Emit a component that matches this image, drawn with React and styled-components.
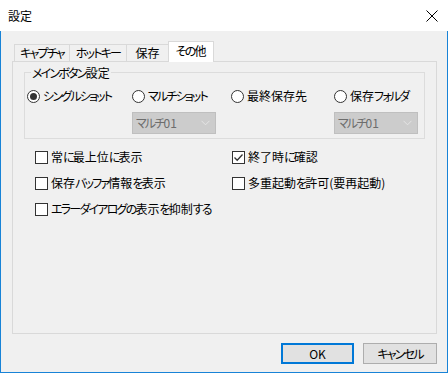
import React from "react";
import styled, { createGlobalStyle } from "styled-components";

const GlobalStyle = createGlobalStyle`
  html, body {
    margin: 0;
    padding: 0;
    background: #ffffff;
  }
  body {
    font-family: "Noto Sans CJK JP", "Noto Sans", sans-serif;
    font-size: 12px;
    color: #000;
    font-feature-settings: "palt";
  }
`;

const SCWindow = styled.div`
  width: 448px;
  height: 373px;
  display: flex;
  flex-direction: column;
  box-sizing: border-box;
`;

const SCTitleBar = styled.div`
  height: 31px;
  flex-shrink: 0;
  background: #ffffff;
  display: flex;
  align-items: center;
  justify-content: space-between;
  padding: 0 10px 0 8px;
  box-sizing: border-box;
  line-height: 16px;
`;

const SCClose = styled.div`
  width: 12px;
  height: 12px;
  display: flex;
  align-items: center;
  justify-content: center;
`;

const SCBody = styled.div`
  flex: 1;
  background: #f0f0f0;
  border: 1px solid #1883d7;
  border-top: none;
  padding: 10px 10px 0 11px;
  box-sizing: border-box;
  display: flex;
  flex-direction: column;
`;

// kana in the original UI font is much narrower than in Noto
const SCKana = styled.span`
  letter-spacing: -1.8px;
`;

const SCTabStrip = styled.div`
  display: flex;
  align-items: flex-end;
  height: 20px;
  margin-left: 2px;
  position: relative;
  z-index: 1;
`;

const SCTab = styled.div`
  width: ${(p) => p.$w}px;
  height: ${(p) => (p.$active ? 21 : 17)}px;
  margin-bottom: ${(p) => (p.$active ? -1 : 0)}px;
  margin-left: ${(p) => (p.$first ? 0 : -1)}px;
  box-sizing: border-box;
  border: 1px solid #d9d9d9;
  border-bottom: none;
  background: ${(p) => (p.$active ? "#ffffff" : "#f0f0f0")};
  display: flex;
  align-items: center;
  justify-content: center;
  line-height: 16px;
  white-space: nowrap;
  padding-bottom: ${(p) => (p.$active ? 2 : 0)}px;
  position: relative;
  z-index: ${(p) => (p.$active ? 2 : 1)};
`;

const SCPanel = styled.div`
  height: 273px;
  box-sizing: border-box;
  border: 1px solid #d9d9d9;
  background: #f0f0f0;
  padding: 10px 11px 0 11px;
`;

const SCGroup = styled.div`
  position: relative;
  border: 1px solid #dcdcdc;
  padding: 15px 0 4px 2px;
`;

const SCLegend = styled.span`
  position: absolute;
  top: -8px;
  left: 6px;
  padding: 0 1px;
  background: #f0f0f0;
  line-height: 16px;
`;

const SCOptionGrid = styled.div`
  display: grid;
  grid-template-columns: 105px 99px 103px 1fr;
  grid-template-rows: 16px 22px;
  row-gap: 8px;
`;

const SCRadioLabel = styled.label`
  display: flex;
  align-items: center;
  gap: 3px;
  line-height: 16px;
  white-space: nowrap;
`;

const SCRadioCircle = styled.span`
  width: 13px;
  height: 13px;
  box-sizing: border-box;
  border: 1px solid #333333;
  border-radius: 50%;
  background: #ffffff;
  display: flex;
  align-items: center;
  justify-content: center;
  flex-shrink: 0;

  &::after {
    content: "";
    width: 7px;
    height: 7px;
    border-radius: 50%;
    background: #333333;
    display: ${(p) => (p.$checked ? "block" : "none")};
  }
`;

const SCSelect = styled.div`
  width: 84px;
  height: 22px;
  box-sizing: border-box;
  background: #cccccc;
  border: 1px solid #bfbfbf;
  color: #6d6d6d;
  display: flex;
  align-items: center;
  justify-content: space-between;
  padding: 0 5px 0 3px;
  line-height: 16px;
`;

const SCCheckGrid = styled.div`
  display: grid;
  grid-template-columns: 197px 1fr;
  grid-auto-rows: 16px;
  row-gap: 10px;
  margin: 10px 0 0 11px;
`;

const SCCheckLabel = styled.label`
  display: flex;
  align-items: center;
  gap: 3px;
  line-height: 16px;
  white-space: nowrap;
`;

const SCCheckBox = styled.span`
  width: 13px;
  height: 13px;
  box-sizing: border-box;
  border: 1px solid #333333;
  background: #ffffff;
  display: flex;
  align-items: center;
  justify-content: center;
  flex-shrink: 0;
`;

const SCFooter = styled.div`
  display: flex;
  justify-content: flex-end;
  gap: 9px;
  margin-top: 9px;
`;

const SCButton = styled.button`
  width: ${(p) => p.$w}px;
  height: 21px;
  box-sizing: border-box;
  background: #e1e1e1;
  border: 1px solid ${(p) => (p.$default ? "#0078d7" : "#adadad")};
  box-shadow: ${(p) => (p.$default ? "inset 0 0 0 1px #0078d7" : "none")};
  font-family: inherit;
  font-size: 12px;
  font-feature-settings: "palt";
  color: #000;
  padding: 0;
  line-height: 16px;
`;

const KANA = /([\u3040-\u30ff]+)/;

const T = ({ children }) =>
  String(children)
    .split(KANA)
    .map((s, i) => (i % 2 ? <SCKana key={i}>{s}</SCKana> : s));

const tabs = [
  { name: "キャプチャ", w: 56 },
  { name: "ホットキー", w: 58 },
  { name: "保存", w: 43 },
  { name: "その他", w: 46, active: true },
];

const Radio = ({ checked, children }) => (
  <SCRadioLabel>
    <SCRadioCircle $checked={checked} />
    <span>
      <T>{children}</T>
    </span>
  </SCRadioLabel>
);

const Check = ({ checked, children }) => (
  <SCCheckLabel>
    <SCCheckBox>
      {checked && (
        <svg width="11" height="11" viewBox="0 0 11 11">
          <polyline
            points="1.5,5.5 4.2,8.3 9.5,2.5"
            fill="none"
            stroke="#333"
            strokeWidth="1.3"
          />
        </svg>
      )}
    </SCCheckBox>
    <span>
      <T>{children}</T>
    </span>
  </SCCheckLabel>
);

const Select = ({ value }) => (
  <SCSelect>
    <span>
      <T>{value}</T>
    </span>
    <svg width="9" height="6" viewBox="0 0 9 6">
      <polyline points="0.5,0.8 4.5,4.8 8.5,0.8" fill="none" stroke="#e4e4e4" strokeWidth="1" />
    </svg>
  </SCSelect>
);

const App = () => {
  return (
    <>
      <GlobalStyle />
      <SCWindow>
        <SCTitleBar>
          <span>設定</span>
          <SCClose>
            <svg width="12" height="12" viewBox="0 0 12 12">
              <path d="M0.5 0.5 L11.5 11.5 M11.5 0.5 L0.5 11.5" stroke="#000" strokeWidth="1" />
            </svg>
          </SCClose>
        </SCTitleBar>
        <SCBody>
          <SCTabStrip>
            {tabs.map((t, i) => (
              <SCTab key={t.name} $w={t.w} $active={t.active} $first={i === 0}>
                <T>{t.name}</T>
              </SCTab>
            ))}
          </SCTabStrip>
          <SCPanel>
            <SCGroup>
              <SCLegend>
                <T>メインボタン設定</T>
              </SCLegend>
              <SCOptionGrid>
                <Radio checked>シングルショット</Radio>
                <Radio>マルチショット</Radio>
                <Radio>最終保存先</Radio>
                <Radio>保存フォルダ</Radio>
                <span />
                <Select value="マルチ01" />
                <span />
                <Select value="マルチ01" />
              </SCOptionGrid>
            </SCGroup>
            <SCCheckGrid>
              <Check>常に最上位に表示</Check>
              <Check checked>終了時に確認</Check>
              <Check>保存バッファ情報を表示</Check>
              <Check>多重起動を許可(要再起動)</Check>
              <Check>エラーダイアログの表示を抑制する</Check>
            </SCCheckGrid>
          </SCPanel>
          <SCFooter>
            <SCButton $w={73} $default>OK</SCButton>
            <SCButton $w={74}>
              <T>キャンセル</T>
            </SCButton>
          </SCFooter>
        </SCBody>
      </SCWindow>
    </>
  );
};

export default App;
